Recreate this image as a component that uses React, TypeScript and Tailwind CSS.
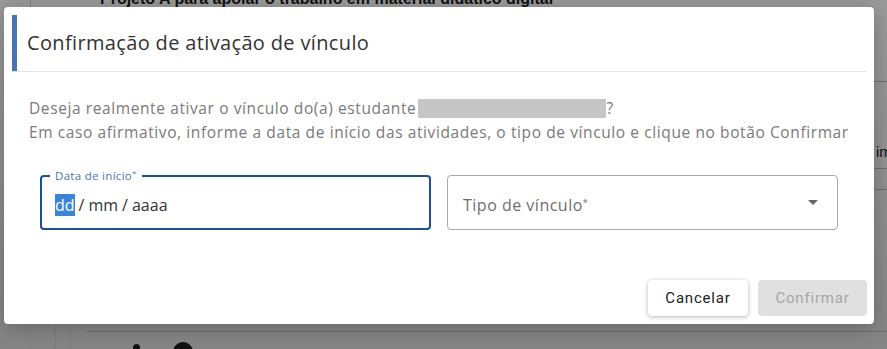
import React from "react";

export default function App() {
  return (
    <div className="relative w-[887px] h-[349px] overflow-hidden bg-[#8e8e8e]" style={{ fontFamily: "'Open Sans', sans-serif" }}>
      {/* background page (dimmed) */}
      <div className="absolute inset-0 bg-gradient-to-b from-[#9a9a9a] to-[#858585]">
        <div className="absolute left-[100px] top-[-13px] text-[16px] font-bold text-[#111] whitespace-nowrap" style={{ fontFamily: "'Liberation Sans', sans-serif" }}>
          Projeto A para apoiar o trabalho em material didático digital
        </div>
        <div className="absolute left-[30px] top-0 h-full w-px bg-[#808080]" />
        <div className="absolute left-[55px] top-[300px] h-[49px] w-px bg-[#7c7c7c]" />
        <div className="absolute left-[70px] top-[300px] h-[49px] w-px bg-[#7c7c7c]" />
        <div className="absolute left-[87px] top-[331px] right-0 h-px bg-[#6e6e6e]" />
        <div className="absolute left-[133px] top-[344px] w-[7px] h-[7px] rounded-full bg-[#111]" />
        <div className="absolute left-[173px] top-[342px] w-[20px] h-[20px] rounded-full bg-[#111]" />
        <div className="absolute left-[874px] top-[81px] right-0 h-px bg-[#6e6e6e]" />
        <div className="absolute left-[874px] top-[168px] right-0 h-px bg-[#6e6e6e]" />
        <div className="absolute left-[874px] top-[189px] right-0 h-px bg-[#6e6e6e]" />
        <div className="absolute left-[876px] top-[141px] text-[15px] text-[#111] whitespace-nowrap" style={{ fontFamily: "'Liberation Sans', sans-serif" }}>im</div>
      </div>

      {/* dialog */}
      <div className="absolute left-[4px] top-[7px] w-[870px] h-[317px] bg-white rounded-[4px] shadow-[0_4px_20px_rgba(0,0,0,0.25)] flex flex-col">
        <div className="flex mt-[8px] ml-[8px] mr-[7px] border-b border-[#e1e4e4]">
          <div className="w-[5px] h-[56px] bg-[#4a75b4]" />
          <div className="pl-[10px] pt-[16px] text-[20px] text-[#333] leading-[24px] tracking-[0.35px]">
            Confirmação de ativação de vínculo
          </div>
        </div>
        <div className="pl-[25px] pt-[24px] text-[15.5px] leading-[24px] text-[#7a7a7a] tracking-[0.6px]">
          <div className="flex items-center">
            <span>Deseja realmente ativar o vínculo do(a) estudante</span>
            <span className="inline-block w-[188px] h-[19px] bg-[#c6c6c6] ml-[2px]" />
            <span>?</span>
          </div>
          <div className="whitespace-nowrap">Em caso afirmativo, informe a data de início das atividades, o tipo de vínculo e clique no botão Confirmar</div>
        </div>
        <div className="flex gap-[16px] pl-[36px] pt-[31px]">
          <div className="relative w-[391px] h-[55px] border-2 border-[#1f4f8f] rounded-[4px] flex items-center pl-[13px] pt-[4px]">
            <span className="absolute left-[8px] top-[-8px] px-[5px] bg-white text-[11.5px] leading-[14px] text-[#4a75b4] tracking-[0.3px]">Data de início<sup className="text-[8px]">*</sup></span>
            <span className="text-[16px] text-[#333]">
              <span className="bg-[#3b84d8] text-white">dd</span><span className="px-[4px]">/</span>mm<span className="px-[4px]">/</span>aaaa
            </span>
          </div>
          <div className="w-[391px] h-[55px] border border-[#aaaaaa] rounded-[4px] flex items-center justify-between pl-[15px] pr-[19px] pt-[4px]">
            <span className="text-[16px] text-[#6e6e6e] tracking-[0.5px]">Tipo de vínculo<sup className="text-[9px]">*</sup></span>
            <svg width="10" height="5" viewBox="0 0 10 5" className="mt-[-4px]"><path d="M0 0 L10 0 L5 5 Z" fill="#666" /></svg>
          </div>
        </div>
        <div className="mt-auto mb-[8px] mr-[7px] flex justify-end gap-[10px]" style={{ fontFamily: "Roboto, sans-serif" }}>
          <button className="w-[100px] h-[36px] rounded-[4px] bg-white shadow-[0_1px_4px_rgba(0,0,0,0.3)] text-[15px] tracking-[0.8px] text-[#222]">Cancelar</button>
          <button className="w-[109px] h-[36px] rounded-[4px] bg-[#e0e0e0] text-[15px] tracking-[0.8px] text-[#a6a6a6]">Confirmar</button>
        </div>
      </div>
    </div>
  );
}
